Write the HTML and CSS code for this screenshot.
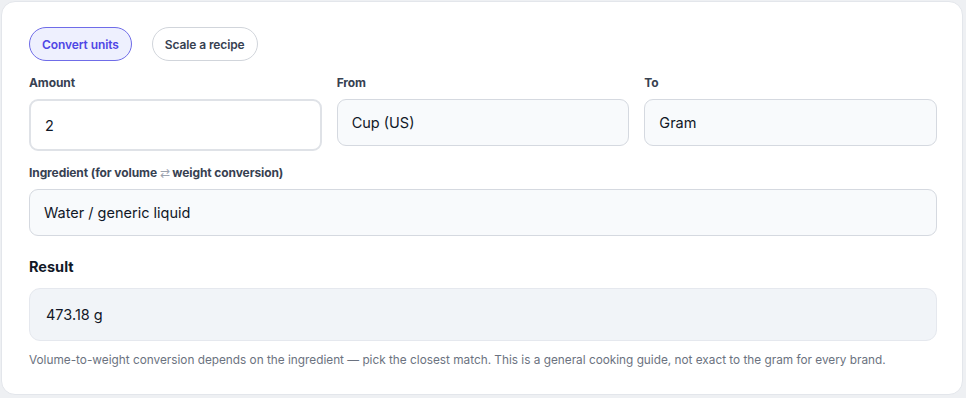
FILE: index.html
```html
<!DOCTYPE html>
<html lang="en">
<head>
    <meta charset="UTF-8">
    <meta name="viewport" content="width=device-width, initial-scale=1.0">
    <title>Kitchen Unit Converter</title>
    <link rel="stylesheet" href="styles.css">
</head>
<body>
    <div class="card">
        <div class="tabs">
            <button class="tab active">Convert units</button>
            <button class="tab">Scale a recipe</button>
        </div>

        <div class="row">
            <div class="field">
                <label>Amount</label>
                <div class="input amount">2</div>
            </div>
            <div class="field">
                <label>From</label>
                <div class="input select">Cup (US)</div>
            </div>
            <div class="field">
                <label>To</label>
                <div class="input select">Gram</div>
            </div>
        </div>

        <div class="field wide">
            <label>Ingredient (for volume <span class="swap">⇄</span> weight conversion)</label>
            <div class="input select">Water / generic liquid</div>
        </div>

        <h3 class="result-title">Result</h3>
        <div class="result">473.18 g</div>

        <p class="note">Volume-to-weight conversion depends on the ingredient — pick the closest match. This is a general cooking guide, not exact to the gram for every brand.</p>
    </div>
</body>
</html>
```

FILE: styles.css
```css
:root {
    --border: #d5d9e0;
    --field: #f8fafc;
    --accent: #4f46e5;
    --text: #1f2937;
    --muted: #6b7280;
}

* {
    margin: 0;
    padding: 0;
    box-sizing: border-box;
}

body {
    background: #eef0f3;
    font-family: 'Inter', 'Lato', sans-serif;
    color: var(--text);
    padding: 1px 3px 3px 1px;
}

.card {
    background: #ffffff;
    border: 1px solid #e3e6eb;
    border-radius: 14px;
    padding: 25px 25px 28px 27px;
    height: 394px;
}

.tabs {
    display: flex;
    gap: 20px;
}

.tab {
    height: 34px;
    padding: 0 12px;
    border: 1px solid #d1d5db;
    border-radius: 17px;
    background: #ffffff;
    font-family: inherit;
    font-size: 12px;
    font-weight: 600;
    letter-spacing: -0.1px;
    color: #374151;
}

.tab.active {
    background: #eef0fe;
    border-color: #6f6ce8;
    color: var(--accent);
}

.row {
    display: grid;
    grid-template-columns: repeat(3, 1fr);
    gap: 15px;
    margin-top: 14px;
}

.field label {
    display: block;
    height: 16px;
    line-height: 16px;
    font-size: 12px;
    font-weight: 700;
    letter-spacing: -0.1px;
    color: #374151;
    margin-bottom: 8px;
}

.swap {
    font-weight: 400;
    color: #9ca3af;
}

.input {
    height: 47px;
    display: flex;
    align-items: center;
    padding: 0 14px;
    border: 1px solid var(--border);
    border-radius: 9px;
    font-size: 14.5px;
    color: #111827;
}

.input.amount {
    height: 52px;
    border: 2px solid #dfe2e7;
    background: #ffffff;
    padding-left: 14px;
}

.input.select {
    background: var(--field);
}

.field.wide {
    margin-top: 14px;
}

.result-title {
    margin-top: 21px;
    font-size: 14.5px;
    font-weight: 700;
    color: #111827;
    height: 20px;
    line-height: 20px;
}

.result {
    margin-top: 11px;
    height: 53px;
    display: flex;
    align-items: center;
    padding: 0 16px;
    background: #f1f4f8;
    border: 1px solid #e5e8ee;
    border-radius: 11px;
    font-size: 14.5px;
    color: #111827;
}

.note {
    margin-top: 12px;
    font-size: 11.8px;
    color: var(--muted);
}
```
